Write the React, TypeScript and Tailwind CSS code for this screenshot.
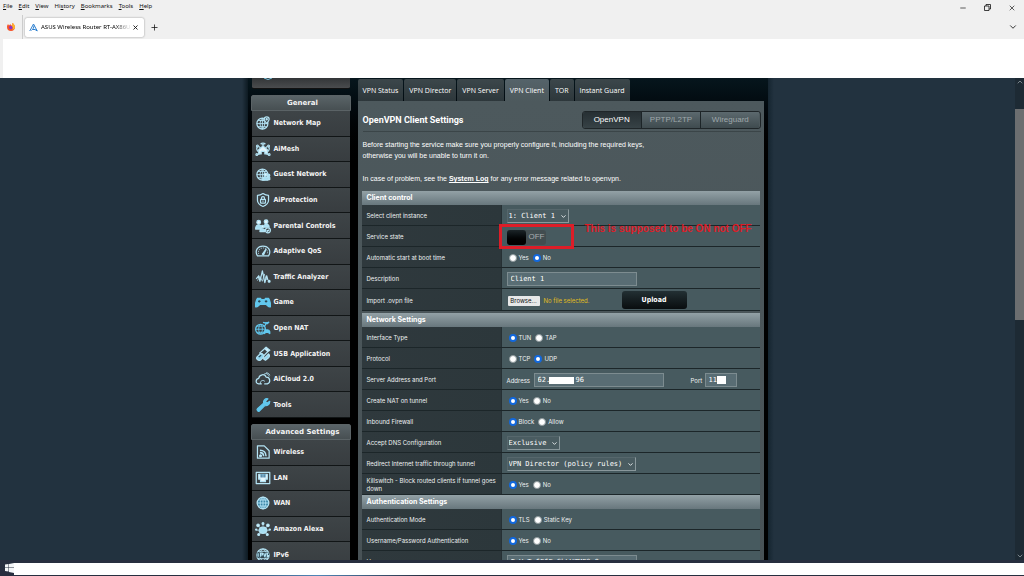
import React from 'react';
import { ChevronDown, ChevronUp, Minus, Plus, X } from 'lucide-react';

interface MenuItem {
  label: string;
  icon: React.ReactNode;
}

interface RadioGroupProps {
  name: string;
  label: string;
  options: string[];
  selected: string;
}

interface RowProps {
  label: string;
  htmlFor?: string;
  className?: string;
  children: React.ReactNode;
}

const browserMenu = ['File', 'Edit', 'View', 'History', 'Bookmarks', 'Tools', 'Help'];
// position of the underlined access key in each browser menu
const accessKeys = [0, 0, 0, 2, 0, 0, 0];

const globe = (
  <>
    <circle cx="11" cy="13" r="9" />
    <path d="M2 13h18M4 8h14M4 18h14M11 4c-5 5-5 13 0 18M11 4c5 5 5 13 0 18M11 4v18" strokeWidth="1.5" />
  </>
);

const generalMenu: MenuItem[] = [
  {
    label: 'Network Map',
    icon: (
      <>
        {globe}
        <path d="M18 13c-3-4-4-5-4-7a4 4 0 0 1 8 0c0 2-1 3-4 7z" fill="#3a4043" />
        <circle cx="18" cy="6" r="1" />
      </>
    ),
  },
  {
    label: 'AiMesh',
    icon: (
      <>
        <path d="M5 13l7-6 7 6v7h-4v-4H9v4H5z" fill="#e6f6fc" />
        <path d="M8 4c2-2 6-2 8 0M10 6c1-1 3-1 4 0M3 8c-2 3-1 6 1 8M21 8c2 3 1 6-1 8M5 8l3 2M19 8l-3 2M4 21l4-2M20 21l-4-2" />
        <circle cx="3" cy="7" r="1.5" />
        <circle cx="21" cy="7" r="1.5" />
        <circle cx="2" cy="21" r="1.5" />
        <circle cx="22" cy="21" r="1.5" />
      </>
    ),
  },
  {
    label: 'Guest Network',
    icon: (
      <>
        {globe}
        <circle cx="16" cy="13" r="2.5" fill="#e6f6fc" />
        <circle cx="21" cy="14" r="2" fill="#a8dff2" />
        <path d="M12 22v-3c0-3 8-3 8 0v3zM20 21h3v-3c0-2-3-2-4-1" fill="#a8dff2" />
      </>
    ),
  },
  {
    label: 'AiProtection',
    icon: (
      <>
        <path d="M12 1.5c3 2 5 3 9 3v8c0 5-4 8-9 10-5-2-9-5-9-10v-8c4 0 6-1 9-3z" />
        <rect x="8" y="11" width="8" height="6" rx="1" />
        <path d="M9.5 11V9a2.5 2.5 0 0 1 5 0v2M12 13v2" />
      </>
    ),
  },
  {
    label: 'Parental Controls',
    icon: (
      <>
        <circle cx="5" cy="6" r="3" fill="#e6f6fc" />
        <circle cx="17" cy="5" r="3" fill="#e6f6fc" />
        <circle cx="11" cy="13" r="2" fill="#e6f6fc" />
        <path d="M0 17c0-9 9-9 9-2v2zM13 14c-1-6 9-6 9 0zM7 21c0-6 8-6 8 0z" fill="#a8dff2" />
        <circle cx="20" cy="19" r="4" fill="#3a4043" />
        <path d="M18 19l1.5 1.5L22 18" />
      </>
    ),
  },
  {
    label: 'Adaptive QoS',
    icon: (
      <>
        <path d="M3 20c-5-8 0-16 9-16s14 8 9 16z" />
        <path d="M5 17c-2-5 2-10 7-10s9 5 7 10" strokeWidth="1.2" strokeDasharray="2 1.5" />
        <path d="M11 17l6-8-4 9z" fill="#e6f6fc" />
      </>
    ),
  },
  {
    label: 'Traffic Analyzer',
    icon: (
      <>
        <path d="M1 15l4-5 2 9 4-17 4 19 3-11 2 7" />
        <path d="M3 18l4-7 4 8 3-12 3 9h1" strokeWidth="1.2" />
        <circle cx="22" cy="19" r="1.5" fill="#e6f6fc" />
      </>
    ),
  },
  {
    label: 'Game',
    icon: (
      <>
        <path d="M3 6h5l1 2h6l1-2h5c2 3 4 10 3 14-3 1-5-3-7-4H7c-2 1-4 5-7 4C-1 16 1 9 3 6z" fill="#62c8ee" stroke="#62c8ee" />
        <path d="M4 11h4M6 9v4M17 9v4M15 11h4" stroke="#2a4856" />
      </>
    ),
  },
  {
    label: 'Open NAT',
    icon: (
      <g stroke="#62c8ee">
        <circle cx="8" cy="14" r="8" />
        <path d="M0 14h16M2 9h12M2 19h12M8 6c-4 4-4 12 0 16M8 6c4 4 4 12 0 16" strokeWidth="1.5" />
        <path d="M12 3l7 2 3-3M17 5l-3 5M14 18c1-4 8-4 9 0v3l-3-2h-3l-3 2z" fill="#62c8ee" />
      </g>
    ),
  },
  {
    label: 'USB Application',
    icon: (
      <>
        <path d="M6 11L15 3l5 5-9 9" />
        <path d="M15 3l2-2 6 5-3 2M17 5l2 2" fill="#e6f6fc" />
        <path d="M2 17l6-6c4 0 6 3 5 6l-5 5c-4 1-8-2-6-5zM13 20l8-8c2 2 2 4 0 6l-5 4z" fill="#8ed4ee" />
        <path d="M5 17l4-3" stroke="#2a4856" />
      </>
    ),
  },
  {
    label: 'AiCloud 2.0',
    icon: (
      <>
        <path d="M10 20H5c-6-1-5-8 0-9 1-7 10-8 12-2 7 0 8 9 2 11h-5" />
        <path d="M8 20c-2-4 4-8 7-4M14 4c3-2 7 0 8 4M17 2c3 0 5 1 6 4" strokeWidth="1.5" />
      </>
    ),
  },
  {
    label: 'Tools',
    icon: (
      <path
        d="M3 18L13 9c-1-4 2-8 7-7l-4 4 2 3 5-3c0 5-4 8-8 7L6 22c-2 1-5-2-3-4z"
        fill="#62c8ee"
        stroke="#62c8ee"
      />
    ),
  },
];

const advancedMenu: MenuItem[] = [
  {
    label: 'Wireless',
    icon: (
      <>
        <path d="M3 2h11l8 8v12H3z" />
        <path d="M7 9c6 0 10 4 10 10M7 13c4 0 6 2 6 6" strokeWidth="2.5" />
        <circle cx="8" cy="18" r="1.5" fill="#e6f6fc" />
      </>
    ),
  },
  {
    label: 'LAN',
    icon: (
      <>
        <rect x="1" y="3" width="22" height="18" />
        <path d="M5 6h14v8h-3v4H8v-4H5z" fill="#e6f6fc" />
        <path d="M9 6v5M12 6v5M15 6v5" stroke="#2f6f96" />
      </>
    ),
  },
  {
    label: 'WAN',
    icon: (
      <>
        <circle cx="12" cy="12" r="9.5" fill="#3c87a8" />
        <path d="M2 12h20M4 7h16M4 17h16M12 2c-6 6-6 14 0 20M12 2c6 6 6 14 0 20M12 2v20" strokeWidth="1.5" />
      </>
    ),
  },
  {
    label: 'Amazon Alexa',
    icon: (
      <>
        <path d="M12 5v3M5 8l3 2M19 8l-3 2M2 14h4M18 14h4M6 20l3-2M18 20l-3-2" strokeWidth="1.2" />
        <circle cx="12" cy="3" r="1.5" fill="#e6f6fc" />
        <circle cx="4" cy="6" r="2" fill="#e6f6fc" />
        <circle cx="20" cy="6" r="2" fill="#e6f6fc" />
        <circle cx="1" cy="13" r="1" fill="#e6f6fc" />
        <circle cx="23" cy="13" r="1" fill="#e6f6fc" />
        <circle cx="5" cy="21" r="1.5" fill="#e6f6fc" />
        <circle cx="19" cy="21" r="1.5" fill="#e6f6fc" />
        <path d="M6 16c-1-5 2-7 6-7s7 2 6 7c-1 4-11 4-12 0z" fill="#a8dff2" />
      </>
    ),
  },
  {
    label: 'IPv6',
    icon: (
      <>
        <circle cx="12" cy="12" r="10" />
        <path d="M4 6h16M4 18h16M12 2c-8 6-8 14 0 20M12 2c8 6 8 14 0 20" strokeWidth="1.5" />
        <rect x="2" y="8" width="20" height="8" fill="#2f4d5a" strokeWidth="0" />
        <path d="M4 9v6M8 15V9h3v3H8M13 9l2 6 2-6M21 9h-2v6h2v-3" />
      </>
    ),
  },
];

const vpnTabs = ['VPN Status', 'VPN Director', 'VPN Server', 'VPN Client', 'TOR', 'Instant Guard'];

const inputClass =
  'h-[14px] border border-[#7d8c90] bg-[#596d74] px-[3px] font-["DejaVu_Sans_Mono",monospace] text-[7px] leading-[12px] text-white outline-none';

const WindowChrome: React.FC = () => (
  <header className="bg-[#f0f0f0] font-['Noto_Sans',sans-serif] text-[6px] text-[#111]">
    <div className="flex h-[15px] items-center justify-between">
      <nav className="flex gap-[6px] pb-[4px] pl-[3px]" aria-label="Menu bar">
        {browserMenu.map((item, i) => (
          <button key={item} type="button" className="leading-[8px]">
            {item.slice(0, accessKeys[i])}
            <u>{item[accessKeys[i]]}</u>
            {item.slice(accessKeys[i] + 1)}
          </button>
        ))}
      </nav>
      <div className="flex items-center gap-[17px] pr-[8px]">
        <button type="button" aria-label="Minimize">
          <Minus size={8} strokeWidth={2} />
        </button>
        <button type="button" aria-label="Restore">
          <svg width="7" height="7" viewBox="0 0 7 7" fill="none" stroke="#111" strokeWidth="0.8">
            <path d="M2 2V.5h4.500V5H5M.5 2H5v4.500H.5z" />
          </svg>
        </button>
        <button type="button" aria-label="Close window">
          <X size={8} strokeWidth={2} />
        </button>
      </div>
    </div>
    <div className="flex h-[24px] items-center">
      <div className="flex h-full w-[23px] items-center justify-center border-r border-[#ccc]">
        <svg width="8" height="8" viewBox="0 0 16 16">
          <path d="M8 16a8 8 0 0 1-8-8c0-3 1-4 2-6l2 3 3-3c0 2 2 3 4 3-1-2-1-3 0-5 3 2 5 5 5 9a8 8 0 0 1-8 7z" fill="#f6552b" />
          <path d="M11 0c3 2 5 5 5 9-1 3-3 4-5 5 2-5-1-8-4-9 2 0 3 1 4 0-1-2-1-3 0-5z" fill="#ffb52e" />
          <circle cx="7.5" cy="9" r="3.5" fill="#8b35c9" />
        </svg>
      </div>
      <div className="ml-[2px] flex h-[19px] w-[119px] items-center rounded-[2px] bg-white pl-[4px] pr-[5px] shadow-[0_0_2px_#888]">
        <svg width="9" height="9" viewBox="0 0 18 18" fill="none" stroke="#2b7fd0" strokeWidth="2">
          <path d="M1.500 16L9 2l7.500 14L12 13H7M5 15c3-3 5-6 5-10" />
        </svg>
        <span className="ml-[3px] flex-1 overflow-hidden whitespace-nowrap bg-linear-to-r from-black from-80% to-transparent bg-clip-text leading-[10px] text-transparent">
          ASUS Wireless Router RT-AX86U
        </span>
        <button type="button" aria-label="Close tab">
          <X size={7} strokeWidth={3} />
        </button>
      </div>
      <button type="button" aria-label="New tab" className="ml-[6px]">
        <Plus size={9} strokeWidth={2} />
      </button>
      <button type="button" aria-label="List all tabs" className="ml-auto mr-[6px]">
        <ChevronDown size={10} strokeWidth={2} />
      </button>
    </div>
    <div className="ml-[3px] h-[39px] bg-white" />
  </header>
);

const SideMenu: React.FC<{ title: string; items: MenuItem[]; className: string }> = ({ title, items, className }) => (
  <nav aria-label={title} className="font-['DejaVu_Sans_Condensed','DejaVu_Sans',sans-serif] text-[7px] font-bold text-[#f4f4f4]">
    <h2 className="flex h-[16px] items-center justify-center rounded-t-[2px] border border-[#5b6366] bg-linear-to-b from-[#5a6468] to-[#474f52] pl-[4px] pt-px font-['DejaVu_Sans',sans-serif]">
      {title}
    </h2>
    <ul className={`mx-px grid auto-rows-fr ${className}`}>
      {items.map((item) => (
        <li key={item.label} className="border-b border-[#111516] bg-linear-to-b from-[#3e4447] to-[#383d40]">
          <a href="#" className="flex h-full items-center gap-[3px] pl-[3px]">
            <svg width="16" height="16" viewBox="-1 0 26 24" fill="none" stroke="#b4e3f4" strokeWidth="2" strokeLinejoin="round" className="shrink-0">
              {item.icon}
            </svg>
            <span className="whitespace-nowrap leading-[10px]">{item.label}</span>
          </a>
        </li>
      ))}
    </ul>
  </nav>
);

const SectionTitle: React.FC<{ children: React.ReactNode }> = ({ children }) => (
  <h3 className="flex h-[14px] items-center bg-linear-to-b from-[#93a1a6] to-[#68777d] pl-[5px] text-[7px] font-bold text-white">
    {children}
  </h3>
);

const Row: React.FC<RowProps> = ({ label, htmlFor, className = 'h-[21px]', children }) => (
  <div className={`grid grid-cols-[140px_1fr] border-b border-[#1c2629] ${className}`}>
    <div className="flex items-center border-r border-[#263034] bg-linear-to-r from-[#2f393d] to-[#2c373b] pl-[5px] pt-[2px] leading-[8px]">
      {htmlFor ? <label htmlFor={htmlFor}>{label}</label> : <span>{label}</span>}
    </div>
    <div className="relative flex items-center bg-[#475a5f] pl-[5px] pt-[2px]">{children}</div>
  </div>
);

const RadioGroup: React.FC<RadioGroupProps> = ({ name, label, options, selected }) => (
  <div role="radiogroup" aria-label={label} className="flex gap-[4px] pl-[2px]">
    {options.map((option) => (
      <label key={option} className="flex items-center gap-[2px] leading-[8px]">
        <input
          type="radio"
          name={name}
          defaultChecked={option === selected}
          className="size-[8px] appearance-none rounded-full border border-[#8d989b] bg-white checked:border-2 checked:border-[#1268dd]"
        />
        {option}
      </label>
    ))}
  </div>
);

const Select: React.FC<{ id: string; value: string }> = ({ id, value }) => (
  <div className="relative">
    <select
      id={id}
      className="block h-[14px] appearance-none border border-[#56676c] border-b-[#8a989c] border-r-[#8a989c] bg-[#4a5c61] pl-px pr-[12px] font-['DejaVu_Sans_Mono',monospace] text-[7px] leading-[12px] text-white"
    >
      <option>{value}</option>
    </select>
    <ChevronDown size={7} strokeWidth={3} className="pointer-events-none absolute right-[2px] top-[4px]" />
  </div>
);

const Scrollbar: React.FC = () => (
  <div className="flex w-[9px] shrink-0 flex-col items-center bg-[#1d2a34] text-[#8c969c]">
    <ChevronUp size={8} strokeWidth={2.5} />
    <div className="mt-[23px] h-[211px] w-full bg-[#6c6e70]" />
    <ChevronDown size={8} strokeWidth={2.5} className="mt-auto" />
  </div>
);

const VpnClientPanel: React.FC = () => (
  <main className="flex min-w-0 flex-1 flex-col">
    <nav aria-label="VPN" className="mt-px flex h-[22px] gap-px font-['Open_Sans',sans-serif] text-[7px] text-white">
      {vpnTabs.map((tab) => (
        <a
          key={tab}
          href="#"
          aria-current={tab === 'VPN Client' ? 'page' : undefined}
          className="flex items-center whitespace-nowrap rounded-t-[2px] bg-linear-to-b from-[#3c474b] to-[#2d373b] px-[5px] pt-[2px] aria-[current=page]:from-[#55636a] aria-[current=page]:to-[#4d595d]"
        >
          {tab}
        </a>
      ))}
    </nav>
    <div className="flex-1 bg-linear-to-b from-[#4d595d] to-[#485256] pl-[4px] pr-[3px] pt-[9px]">
      <div className="ml-px flex items-center justify-between">
        <h1 className="pt-[2px] font-['Roboto',sans-serif] text-[9px] font-bold leading-[17px] text-white">OpenVPN Client Settings</h1>
        <div className="flex h-[18px] w-[179px] divide-x divide-[#1c2427] overflow-hidden rounded-[3px] border border-[#1f2629] font-['Liberation_Sans',sans-serif] text-[8px] text-[#9fa8ab]">
          <button type="button" className="flex-1 bg-linear-to-b from-[#262f33] to-[#374246] pt-px text-white">OpenVPN</button>
          <button type="button" className="flex-1 bg-linear-to-b from-[#5c696e] to-[#3f4b4f] pt-px">PPTP/L2TP</button>
          <button type="button" className="flex-1 bg-linear-to-b from-[#5c696e] to-[#3f4b4f] pt-px">Wireguard</button>
        </div>
      </div>
      <div className="ml-px mt-[2px] border-t border-[#3b4548] pt-[7px] font-['Liberation_Sans',sans-serif] text-[7px] leading-[11px] text-white">
        <p>
          Before starting the service make sure you properly configure it, including the required keys,
          <br />
          otherwise you will be unable to turn it on.
        </p>
        <p className="mt-[12px]">
          In case of problem, see the{' '}
          <a href="#" className="font-bold underline">System Log</a> for any error message related to openvpn.
        </p>
      </div>

      <form className="mr-px mt-[7px] font-['Inter',sans-serif] text-[6px] text-[#eef1f2]">
        <SectionTitle>Client control</SectionTitle>
        <Row label="Select client instance" htmlFor="instance">
          <Select id="instance" value="1: Client 1" />
        </Row>
        <Row label="Service state" htmlFor="service">
          <button
            id="service"
            type="button"
            role="switch"
            aria-checked="false"
            className="flex h-[15px] w-[39px] items-center gap-[3px] rounded-[3px] bg-[#424d50] font-['Liberation_Sans',sans-serif] text-[8px] text-[#a9aeb0]"
          >
            <span className="h-full w-[19px] rounded-[3px] bg-linear-to-b from-[#1c2529] to-black" />
            OFF
          </button>
          <div className="pointer-events-none absolute -left-[3px] -top-[2px] z-10 h-[25px] w-[75px] border-3 border-[#dd1d28]" />
          <span className="absolute -top-[3px] left-[83px] z-10 whitespace-nowrap font-['Liberation_Sans',sans-serif] text-[10px] font-bold leading-[12px] text-[#dd1d28]">
            This is supposed to be ON not OFF
          </span>
        </Row>
        <Row label="Automatic start at boot time">
          <RadioGroup name="autostart" label="Automatic start at boot time" options={['Yes', 'No']} selected="No" />
        </Row>
        <Row label="Description" htmlFor="description">
          <input id="description" type="text" defaultValue="Client 1" className={`w-[130px] ${inputClass}`} />
        </Row>
        <Row label="Import .ovpn file" htmlFor="ovpn" className="h-[22px]">
          <button id="ovpn" type="button" className="ml-px h-[10px] w-[32px] rounded-[1px] bg-[#e6e7e8] text-[#111]">Browse...</button>
          <span className="ml-[4px] text-[#e0be1e]">No file selected.</span>
          <button
            type="button"
            className="absolute left-[120px] top-[2px] h-[18px] w-[65px] rounded-[3px] bg-linear-to-b from-[#233034] to-[#090d0f] font-['DejaVu_Sans_Condensed','DejaVu_Sans',sans-serif] text-[7px] font-bold text-white"
          >
            Upload
          </button>
        </Row>

        <div className="mt-[2px]">
          <SectionTitle>Network Settings</SectionTitle>
        </div>
        <Row label="Interface Type">
          <RadioGroup name="interface" label="Interface Type" options={['TUN', 'TAP']} selected="TUN" />
        </Row>
        <Row label="Protocol">
          <RadioGroup name="protocol" label="Protocol" options={['TCP', 'UDP']} selected="UDP" />
        </Row>
        <Row label="Server Address and Port" htmlFor="address">
          <label htmlFor="address" className="w-[27px]">Address</label>
          <div className="relative">
            <input id="address" type="text" defaultValue="62.1     96" className={`block w-[130px] ${inputClass}`} />
            <span className="absolute left-[15px] top-[4px] h-[7px] w-[25px] bg-white" />
          </div>
          <label htmlFor="port" className="ml-[27px] w-[14px]">Port</label>
          <div className="relative">
            <input id="port" type="text" defaultValue="11" className={`block w-[32px] ${inputClass}`} />
            <span className="absolute left-[12px] top-[3px] h-[8px] w-[9px] bg-white" />
          </div>
        </Row>
        <Row label="Create NAT on tunnel">
          <RadioGroup name="nat" label="Create NAT on tunnel" options={['Yes', 'No']} selected="Yes" />
        </Row>
        <Row label="Inbound Firewall">
          <RadioGroup name="firewall" label="Inbound Firewall" options={['Block', 'Allow']} selected="Block" />
        </Row>
        <Row label="Accept DNS Configuration" htmlFor="dns">
          <Select id="dns" value="Exclusive" />
        </Row>
        <Row label="Redirect Internet traffic through tunnel" htmlFor="redirect">
          <Select id="redirect" value="VPN Director (policy rules)" />
        </Row>
        <Row label="Killswitch - Block routed clients if tunnel goes down">
          <RadioGroup name="killswitch" label="Killswitch" options={['Yes', 'No']} selected="Yes" />
        </Row>

        <SectionTitle>Authentication Settings</SectionTitle>
        <Row label="Authentication Mode">
          <RadioGroup name="authmode" label="Authentication Mode" options={['TLS', 'Static Key']} selected="TLS" />
        </Row>
        <Row label="Username/Password Authentication">
          <RadioGroup name="userpass" label="Username/Password Authentication" options={['Yes', 'No']} selected="Yes" />
        </Row>
        <Row label="Username" htmlFor="username">
          <input id="username" type="text" defaultValue="TyVcTw6F6FxGkLVZMF8x9c" className={`w-[130px] ${inputClass}`} />
        </Row>
      </form>
    </div>
  </main>
);

export default function App() {
  return (
    <div className="flex h-screen flex-col overflow-hidden bg-[#22323f]">
      <WindowChrome />
      <div className="flex min-h-0 flex-1 overflow-hidden">
        <div className="flex min-w-0 flex-1 justify-center overflow-hidden">
          <div className="w-[6px] bg-linear-to-r from-transparent to-[#0d1a22]" />
          <div className="flex w-full max-w-[520px] gap-[7px] self-start bg-linear-to-b from-[#06161d] to-black to-20% pl-[3px] pr-[4px]">
            <aside className="w-[100px] shrink-0">
              <div className="mx-px mb-[6px] h-[11px] rounded-b-[2px] border-b border-[#111] bg-linear-to-b from-[#333638] to-[#4a4c4e] pl-[12px]">
                <svg width="8" height="3" viewBox="0 0 8 3" stroke="#7cc4de" fill="none">
                  <path d="M0 0l4 1.500L8 0" />
                </svg>
              </div>
              <div className="flex flex-col gap-[6px]">
                <SideMenu title="General" items={generalMenu} className="h-[307px]" />
                <SideMenu title="Advanced Settings" items={advancedMenu} className="h-[128px]" />
              </div>
            </aside>
            <VpnClientPanel />
          </div>
          <div className="w-[6px] bg-linear-to-r from-[#152530] to-transparent" />
        </div>
        <Scrollbar />
      </div>
      <footer className="flex h-[16px] shrink-0 bg-[#272e3f] pt-[3px]">
        <button type="button" aria-label="Start" className="flex w-[14px] justify-end">
          <svg width="9" height="10" viewBox="0 0 9 10" fill="#f4f6f8">
            <path d="M0 1.500l3.500-.5v3.500H0zM4 1l5-1v4.500H4zM0 5h3.500v3.500L0 8zM4 5h5v5l-5-1z" />
          </svg>
        </button>
        <div className="flex flex-1 flex-col bg-white">
          <div className="mt-auto h-px bg-linear-to-r from-[#272e3f] from-16% via-[#4f86b8] via-30% to-[#272e3f] to-41%" />
        </div>
      </footer>
    </div>
  );
}
